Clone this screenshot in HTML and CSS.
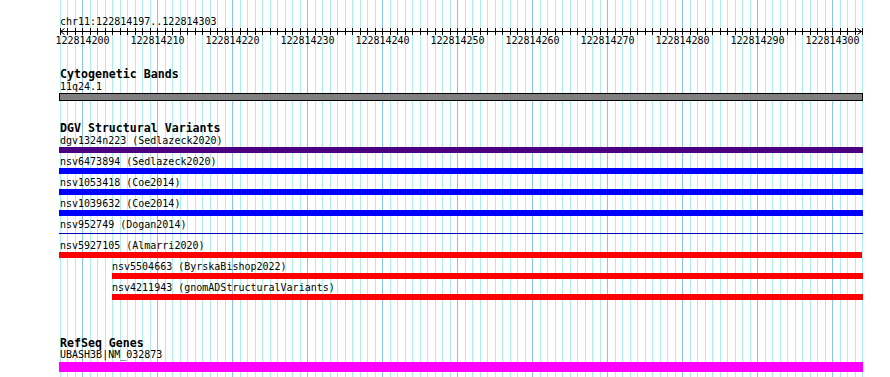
FILE: index.html
```html
<!DOCTYPE html>
<html lang="en">
<head>
<meta charset="UTF-8">
<meta name="viewport" content="width=device-width, initial-scale=1.0">
<title>chr11:122814197..122814303</title>
<link rel="stylesheet" href="styles.css">
</head>
<body>
<div class="panel">
  <div class="locus">chr11:122814197..122814303</div>

  <svg class="ruler" width="804" height="20" viewBox="0 0 804 20">
    <defs>
      <pattern id="ticks" width="15" height="7" patternUnits="userSpaceOnUse">
        <path d="M1.5 0V7M8.5 0V7" stroke="#000"/>
      </pattern>
    </defs>
    <rect x="0" y="0" width="804" height="7" fill="url(#ticks)"/>
    <path d="M1 3.5H803" stroke="#000"/>
    <path d="M5.5 0.5L1.5 3.5L5.5 6.5M798.5 0.5L802.5 3.5L798.5 6.5" stroke="#000" fill="none"/>
    <text x="23.5" y="16">122814200</text>
    <text x="98.5" y="16">122814210</text>
    <text x="173.5" y="16">122814220</text>
    <text x="248.5" y="16">122814230</text>
    <text x="323.5" y="16">122814240</text>
    <text x="398.5" y="16">122814250</text>
    <text x="473.5" y="16">122814260</text>
    <text x="548.5" y="16">122814270</text>
    <text x="623.5" y="16">122814280</text>
    <text x="698.5" y="16">122814290</text>
    <text x="773.5" y="16">122814300</text>
  </svg>

  <section class="track track-bands">
    <h2 class="track-title">Cytogenetic Bands</h2>
    <div class="feature">
      <div class="label">11q24.1</div>
      <div class="bar bar-band"></div>
    </div>
  </section>

  <section class="track track-dgv">
    <h2 class="track-title">DGV Structural Variants</h2>
    <div class="feature">
      <div class="label">dgv1324n223 (Sedlazeck2020)</div>
      <div class="bar indigo"></div>
    </div>
    <div class="feature">
      <div class="label">nsv6473894 (Sedlazeck2020)</div>
      <div class="bar blue"></div>
    </div>
    <div class="feature">
      <div class="label">nsv1053418 (Coe2014)</div>
      <div class="bar blue"></div>
    </div>
    <div class="feature">
      <div class="label">nsv1039632 (Coe2014)</div>
      <div class="bar blue"></div>
    </div>
    <div class="feature">
      <div class="label">nsv952749 (Dogan2014)</div>
      <div class="bar thin"></div>
    </div>
    <div class="feature">
      <div class="label">nsv5927105 (Almarri2020)</div>
      <div class="bar red short"></div>
    </div>
    <div class="feature nested">
      <div class="label">nsv5504663 (ByrskaBishop2022)</div>
      <div class="bar red"></div>
    </div>
    <div class="feature nested">
      <div class="label">nsv4211943 (gnomADStructuralVariants)</div>
      <div class="bar red"></div>
    </div>
  </section>

  <section class="track track-refseq">
    <h2 class="track-title">RefSeq Genes</h2>
    <div class="feature">
      <div class="label">UBASH3B|NM_032873</div>
      <div class="bar bar-gene"></div>
    </div>
  </section>
</div>
</body>
</html>
```

FILE: styles.css
```css
/* genome browser panel */
body {
  margin: 0;
  background-color: #fff;
  color: #000;
  font-family: "DejaVu Sans Mono", "Liberation Mono", monospace;
  font-size: 10px;
}

.panel {
  box-sizing: border-box;
  margin-left: 59px;
  width: 804px;
  height: 377px;
  padding-top: 15px;
  background-image:
    linear-gradient(to right, #87c4ee 1px, transparent 1px),
    linear-gradient(to right, #afeeee 1px, transparent 1px 7px, #afeeee 7px 8px, transparent 8px);
  background-size: 75px 100%, 15px 100%;
  background-position: 23px 0, 1px 0;
  background-repeat: repeat-x;
}

.locus {
  line-height: 13px;
  padding-left: 1px;
}

.ruler {
  display: block;
  overflow: visible;
}

.ruler text {
  font-family: "DejaVu Sans Mono", "Liberation Mono", monospace;
  font-size: 10px;
  text-anchor: middle;
  fill: #000;
}

.track-title {
  margin: 0;
  padding-left: 1px;
  font-size: 11.6px;
  font-weight: bold;
  line-height: 12px;
}

.track-bands {
  margin-top: 20px;
}

.track-dgv {
  margin-top: 21px;
}

/* last dgv row's 2px margin collapses into this one */
.track-refseq {
  margin-top: 37px;
}

.label {
  position: relative;
  line-height: 13px;
  padding-left: 1px;
  white-space: nowrap;
}

/* keep the underscore clear of the gene bar */
.track-refseq .label {
  line-height: 11px;
  padding-bottom: 2px;
}

.bar {
  height: 6px;
}

.track-dgv .feature {
  margin-bottom: 2px;
}

.feature.nested {
  margin-left: 53px;
}

.feature.nested .label {
  padding-left: 0;
}

.bar-band {
  box-sizing: border-box;
  height: 8px;
  border: 1px solid #000;
  background-color: #808080;
}

.bar-gene {
  height: 10px;
  background-color: #ff00ff;
}

.indigo {
  background-color: #4b0082;
}

.blue {
  background-color: #0000ff;
}

.red {
  background-color: #ff0000;
}

.red.short {
  margin-right: 1px;
}

.thin {
  background: linear-gradient(transparent 2px, #0000b4 2px 3px, transparent 3px);
}
```
